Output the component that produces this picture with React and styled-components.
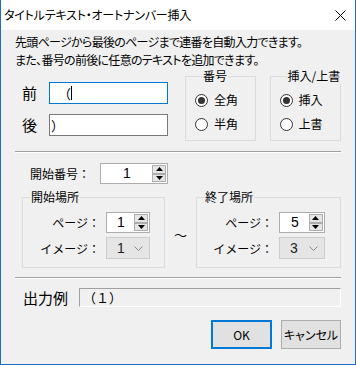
import React from 'react';
import styled, { createGlobalStyle } from 'styled-components';

const Global = createGlobalStyle`
  html, body { margin: 0; padding: 0; background: #f0f0f0; }
  body {
    font-family: "Noto Sans CJK JP", "Noto Sans", sans-serif;
    font-size: 12px;
    color: #000;
    font-feature-settings: "palt";
  }
  * { box-sizing: border-box; }
`;

const Window = styled.div`
  width: 356px;
  height: 365px;
  display: flex;
  flex-direction: column;
  border: 1px solid #1c6fc4;
  border-top: none;
  background: #f0f0f0;
  overflow: hidden;
`;

const TitleBar = styled.div`
  height: 30px;
  flex: none;
  background: #fff;
  display: flex;
  align-items: center;
  padding-left: 3px;
`;

const Title = styled.div`
  font-size: 12px;
  letter-spacing: -0.2px;
  line-height: 16px;
`;

const CloseBtn = styled.div`
  margin-left: auto;
  width: 30px;
  height: 30px;
  display: flex;
  align-items: center;
  justify-content: center;
`;

const Body = styled.div`
  flex: 1;
  padding: 3px 14px 0 14px;
  display: flex;
  flex-direction: column;
`;

const Intro = styled.p`
  margin: 0;
  font-size: 12px;
  line-height: 18px;
  letter-spacing: -0.7px;
  white-space: nowrap;
`;

const Row = styled.div`
  display: flex;
  align-items: flex-start;
  margin-top: ${p => p.$mt || 0}px;
  padding-left: ${p => p.$pl || 0}px;
  gap: ${p => p.$gap || 0}px;
`;

const FieldCol = styled.div`
  display: flex;
  flex-direction: column;
  gap: 10px;
  margin-top: 13px;
  padding-left: 7px;
`;

const FieldRow = styled.div`
  display: flex;
  align-items: center;
`;

const BigLabel = styled.span`
  width: 27px;
  font-size: 15px;
  line-height: 22px;
`;

const TextInput = styled.div`
  width: 119px;
  height: 22px;
  background: #fff;
  border: 1px solid ${p => (p.$focus ? '#0078d7' : '#7a7a7a')};
  display: flex;
  align-items: center;
  padding-left: ${p => (p.$focus ? 8 : 1)}px;
  font-size: 13px;
  font-feature-settings: normal;
`;

const Caret = styled.span`
  display: inline-block;
  width: 1px;
  height: 14px;
  background: #000;
  margin-left: 0px;
`;

const Group = styled.fieldset`
  margin: 0 0 0 ${p => p.$ml || 0}px;
  padding: ${p => p.$pad || '0'};
  border: 1px solid #dcdcdc;
  min-width: 0;
  width: ${p => p.$w}px;
  height: ${p => p.$h}px;
`;

const Legend = styled.legend`
  padding: 0 1px;
  margin-left: 7px;
  font-size: 12px;
  line-height: 14px;
  white-space: nowrap;
`;

const RadioList = styled.div`
  display: flex;
  flex-direction: column;
`;

const RadioRow = styled.div`
  display: flex;
  align-items: center;
  height: 24px;
  gap: 6px;
`;

const RadioCircle = styled.span`
  width: 13px;
  height: 13px;
  border: 1px solid #333;
  border-radius: 50%;
  background: #fff;
  display: flex;
  align-items: center;
  justify-content: center;
  &::after {
    content: "";
    width: 7px;
    height: 7px;
    border-radius: 50%;
    background: #333;
    display: ${p => (p.$checked ? 'block' : 'none')};
  }
`;

const RadioText = styled.span`
  font-size: 12px;
  line-height: 14px;
`;

const Separator = styled.div`
  height: 2px;
  border-top: 1px solid #a0a0a0;
  border-bottom: 1px solid #fff;
  margin-top: ${p => p.$mt}px;
`;

const Label = styled.span`
  font-size: 12px;
  line-height: 21px;
  width: ${p => p.$w}px;
  text-align: ${p => p.$align || 'left'};
  flex: none;
  font-feature-settings: normal;
  white-space: nowrap;
`;

const Spin = styled.div`
  width: ${p => p.$w}px;
  height: 21px;
  border: 1px solid #adadad;
  background: #fff;
  display: flex;
  padding: 1px;
  flex: none;
`;

const SpinValue = styled.div`
  flex: 1;
  text-align: center;
  font-family: "Liberation Sans", Arial, sans-serif;
  font-size: 14px;
  line-height: 17px;
`;

const SpinButtons = styled.div`
  width: 14px;
  display: flex;
  flex-direction: column;
`;

const SpinBtn = styled.div`
  flex: 1;
  border: 1px solid #adadad;
  background: #e5e5e5;
  display: flex;
  align-items: center;
  justify-content: center;
`;

const Select = styled.div`
  width: ${p => p.$w}px;
  height: 22px;
  border: 1px solid #cccccc;
  background: #e5e5e5;
  display: flex;
  align-items: center;
  padding: 0 6px 0 10px;
  justify-content: space-between;
  flex: none;
`;

const SelectValue = styled.span`
  font-family: "Liberation Sans", Arial, sans-serif;
  font-size: 14px;
  color: #222;
`;

const PlaceGrid = styled.div`
  display: grid;
  grid-template-columns: ${p => p.$lw}px auto;
  column-gap: 6px;
  row-gap: 4px;
  align-items: center;
  padding-top: 8px;
`;

const Tilde = styled.div`
  width: 31px;
  align-self: center;
  text-align: center;
  font-size: 13px;
  padding-top: 10px;
  font-feature-settings: normal;
`;

const OutputLabel = styled.span`
  font-size: 15px;
  line-height: 19px;
  width: 56px;
  flex: none;
`;

const OutputBox = styled.div`
  flex: 1;
  height: 19px;
  border-top: 1px solid #a0a0a0;
  border-left: 1px solid #a0a0a0;
  border-bottom: 1px solid #fff;
  border-right: 1px solid #fff;
  font-size: 13px;
  line-height: 17px;
  padding-left: 3px;
  font-feature-settings: normal;
`;

const ButtonRow = styled.div`
  display: flex;
  justify-content: flex-end;
  gap: 9px;
  margin-top: 13px;
`;

const Button = styled.div`
  width: ${p => p.$w}px;
  height: 29px;
  background: #e1e1e1;
  border: ${p => (p.$primary ? '2px solid #0078d7' : '1px solid #adadad')};
  display: flex;
  align-items: center;
  justify-content: center;
  font-size: 12px;
`;

const Up = () => (
  <svg width="7" height="4" viewBox="0 0 7 4"><path d="M0 4 L3.5 0 L7 4 Z" fill="#000" /></svg>
);
const Down = () => (
  <svg width="7" height="4" viewBox="0 0 7 4"><path d="M0 0 L3.5 4 L7 0 Z" fill="#000" /></svg>
);
const Chevron = () => (
  <svg width="9" height="5" viewBox="0 0 9 5"><polyline points="0.5,0.5 4.5,4.5 8.5,0.5" fill="none" stroke="#8a8a8a" strokeWidth="1" /></svg>
);

const SpinBox = ({ value, w }) => (
  <Spin $w={w}>
    <SpinValue>{value}</SpinValue>
    <SpinButtons>
      <SpinBtn><Up /></SpinBtn>
      <SpinBtn><Down /></SpinBtn>
    </SpinButtons>
  </Spin>
);

const Radio = ({ checked, children }) => (
  <RadioRow>
    <RadioCircle $checked={checked} />
    <RadioText>{children}</RadioText>
  </RadioRow>
);

export default function App() {
  return (
    <>
      <Global />
      <Window>
        <TitleBar>
          <Title>タイトルテキスト・オートナンバー挿入</Title>
          <CloseBtn>
            <svg width="11" height="11" viewBox="0 0 11 11">
              <path d="M0.5 0.5 L10.5 10.5 M10.5 0.5 L0.5 10.5" stroke="#000" strokeWidth="1" />
            </svg>
          </CloseBtn>
        </TitleBar>
        <Body>
          <Intro>先頭ページから最後のページまで連番を自動入力できます。</Intro>
          <Intro>また、番号の前後に任意のテキストを追加できます。</Intro>

          <Row>
            <FieldCol>
              <FieldRow>
                <BigLabel>前</BigLabel>
                <TextInput $focus>（<Caret /></TextInput>
              </FieldRow>
              <FieldRow>
                <BigLabel>後</BigLabel>
                <TextInput>）</TextInput>
              </FieldRow>
            </FieldCol>
            <Group $ml={17} $w={72} $h={72} $pad="5px 0 0 9px">
              <Legend>番号</Legend>
              <RadioList>
                <Radio checked>全角</Radio>
                <Radio>半角</Radio>
              </RadioList>
            </Group>
            <Group $ml={14} $w={73} $h={72} $pad="5px 0 0 9px">
              <Legend>挿入/上書</Legend>
              <RadioList>
                <Radio checked>挿入</Radio>
                <Radio>上書</Radio>
              </RadioList>
            </Group>
          </Row>

          <Separator $mt={10} />

          <Row $mt={10} $pl={15}>
            <Label $w={70}>開始番号：</Label>
            <SpinBox value="1" w={68} />
          </Row>

          <Row $mt={6} $pl={7}>
            <Group $w={144} $h={78} $pad="0">
              <Legend>開始場所</Legend>
              <PlaceGrid $lw={77}>
                <Label $w={77} $align="right">ページ：</Label>
                <SpinBox value="1" w={44} />
                <Label $w={77} $align="right">イメージ：</Label>
                <Select $w={44}><SelectValue>1</SelectValue><Chevron /></Select>
              </PlaceGrid>
            </Group>
            <Tilde>～</Tilde>
            <Group $w={146} $h={78} $pad="0">
              <Legend>終了場所</Legend>
              <PlaceGrid $lw={76}>
                <Label $w={76} $align="right">ページ：</Label>
                <SpinBox value="5" w={46} />
                <Label $w={76} $align="right">イメージ：</Label>
                <Select $w={46}><SelectValue>3</SelectValue><Chevron /></Select>
              </PlaceGrid>
            </Group>
          </Row>

          <Separator $mt={9} />

          <Row $mt={9} $pl={8}>
            <OutputLabel>出力例</OutputLabel>
            <OutputBox>（１）</OutputBox>
          </Row>

          <ButtonRow>
            <Button $primary $w={61}>OK</Button>
            <Button $w={60}>キャンセル</Button>
          </ButtonRow>
        </Body>
      </Window>
    </>
  );
}
